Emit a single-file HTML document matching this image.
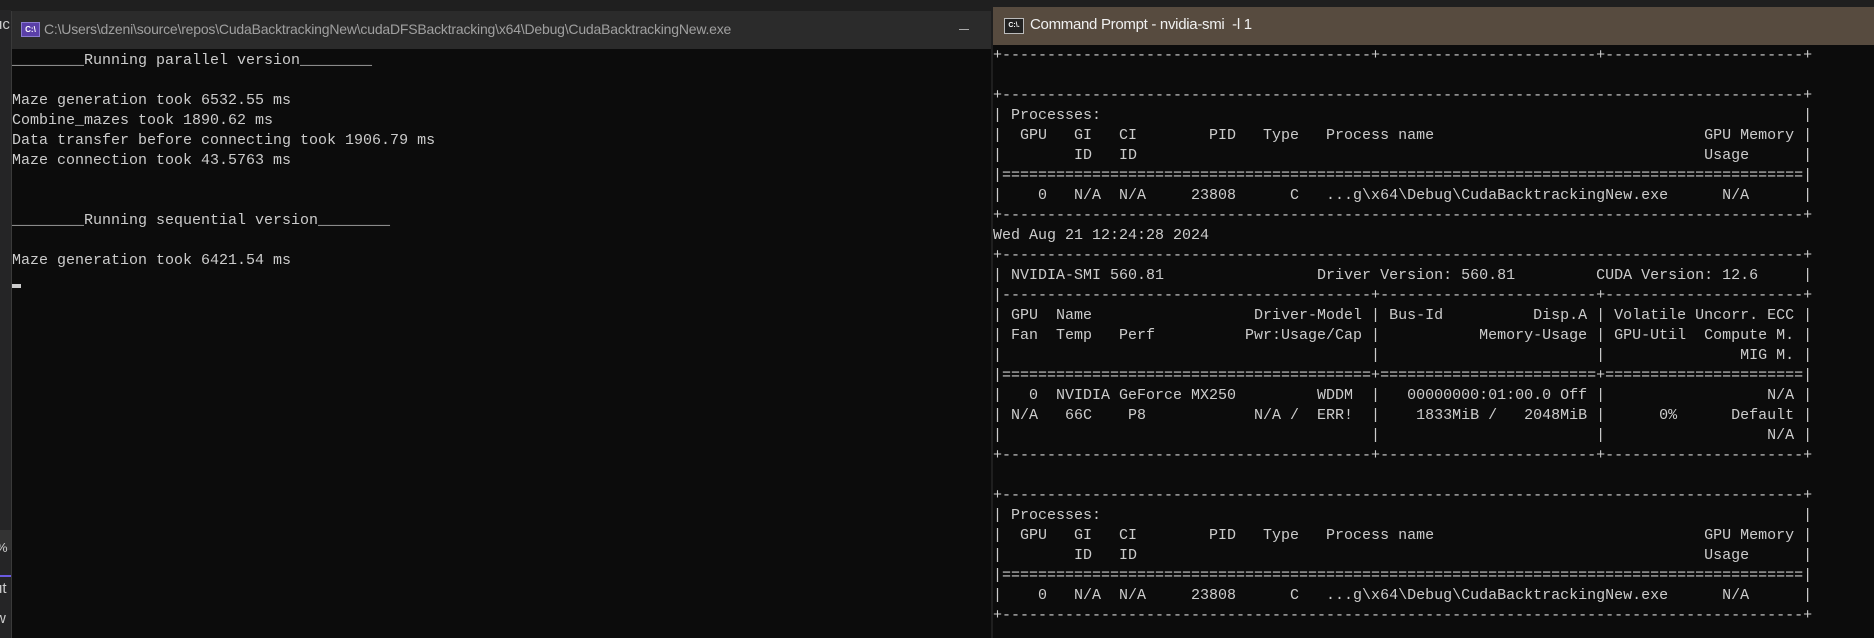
<!DOCTYPE html>
<html><head><meta charset="utf-8"><style>
html,body{margin:0;padding:0;width:1874px;height:638px;overflow:hidden;background:#1f1f1f;position:relative}
.side{position:absolute;left:0;top:10px;width:11px;height:628px;background:#252526;overflow:hidden;font-family:"Liberation Sans",sans-serif;color:#ccc;font-size:15px}
.w1{position:absolute;left:11px;top:11px;width:979px;height:627px;background:#0c0c0c;border-left:1px solid #3a3a3a}
.t1{position:absolute;left:0;top:0;width:100%;height:38px;background:#2b2b2b}
.t1 .txt{position:absolute;left:32px;top:10px;font-family:"Liberation Sans",sans-serif;font-size:14px;color:#a0a0a0;white-space:nowrap;letter-spacing:-0.2px}
.icon{position:absolute;left:9px;top:11px;width:19px;height:15px;background:#5a3fa8;border:1px solid #8a7ad0;box-sizing:border-box;font:bold 8px "Liberation Sans",sans-serif;color:#fff;text-align:center;line-height:13px}
.min{position:absolute;right:22px;top:18px;width:10px;height:1px;background:#aaa}
pre{margin:0;position:absolute;font-family:"Liberation Mono",monospace;font-size:15px;line-height:20px;color:#cccccc}
.w2{position:absolute;left:993px;top:7px;width:881px;height:631px;background:#0c0c0c}
.t2{position:absolute;left:0;top:0;width:100%;height:38px;background:#574b3f}
.t2 .txt{position:absolute;left:37px;top:9px;font-family:"Liberation Sans",sans-serif;font-size:15px;color:#f0f0f0;white-space:nowrap;letter-spacing:-0.3px}
.icon2{position:absolute;left:11px;top:11px;width:20px;height:16px;background:#222;border:1px solid #bbb;box-sizing:border-box;font:bold 7px "Liberation Sans",sans-serif;color:#fff;line-height:13px;text-align:center}
.cur{position:absolute;left:0;top:273px;width:9px;height:4px;background:#ccc}
</style></head><body>
<div class="side"><div style="position:absolute;top:6px;left:-6px">uc</div><div style="position:absolute;top:520px;left:-3px;width:14px;height:20px;background:#333"></div><div style="position:absolute;top:530px;left:-4px;font-size:13px">%</div><div style="position:absolute;top:565px;left:0;width:11px;height:2px;background:#6a5ae0"></div><div style="position:absolute;top:570px;left:-6px">ut</div><div style="position:absolute;top:600px;left:-5px">w</div></div>
<div class="w1">
<div class="t1"><div class="icon">C:\</div><div class="txt">C:\Users\dzeni\source\repos\CudaBacktrackingNew\cudaDFSBacktracking\x64\Debug\CudaBacktrackingNew.exe</div><div class="min"></div></div>
<pre style="left:0;top:40px">________Running parallel version________

Maze generation took 6532.55 ms
Combine_mazes took 1890.62 ms
Data transfer before connecting took 1906.79 ms
Maze connection took 43.5763 ms


________Running sequential version________

Maze generation took 6421.54 ms</pre>
<div class="cur"></div>
</div>
<div class="w2">
<div class="t2"><div class="icon2">C:\.</div><div class="txt">Command Prompt - nvidia-smi&nbsp; -l 1</div></div>
<pre style="left:0;top:39px">+-----------------------------------------+------------------------+----------------------+

+-----------------------------------------------------------------------------------------+
| Processes:                                                                              |
|  GPU   GI   CI        PID   Type   Process name                              GPU Memory |
|        ID   ID                                                               Usage      |
|=========================================================================================|
|    0   N/A  N/A     23808      C   ...g\x64\Debug\CudaBacktrackingNew.exe      N/A      |
+-----------------------------------------------------------------------------------------+
Wed Aug 21 12:24:28 2024
+-----------------------------------------------------------------------------------------+
| NVIDIA-SMI 560.81                 Driver Version: 560.81         CUDA Version: 12.6     |
|-----------------------------------------+------------------------+----------------------+
| GPU  Name                  Driver-Model | Bus-Id          Disp.A | Volatile Uncorr. ECC |
| Fan  Temp   Perf          Pwr:Usage/Cap |           Memory-Usage | GPU-Util  Compute M. |
|                                         |                        |               MIG M. |
|=========================================+========================+======================|
|   0  NVIDIA GeForce MX250         WDDM  |   00000000:01:00.0 Off |                  N/A |
| N/A   66C    P8            N/A /  ERR!  |    1833MiB /   2048MiB |      0%      Default |
|                                         |                        |                  N/A |
+-----------------------------------------+------------------------+----------------------+

+-----------------------------------------------------------------------------------------+
| Processes:                                                                              |
|  GPU   GI   CI        PID   Type   Process name                              GPU Memory |
|        ID   ID                                                               Usage      |
|=========================================================================================|
|    0   N/A  N/A     23808      C   ...g\x64\Debug\CudaBacktrackingNew.exe      N/A      |
+-----------------------------------------------------------------------------------------+</pre>
</div>
</body></html>
